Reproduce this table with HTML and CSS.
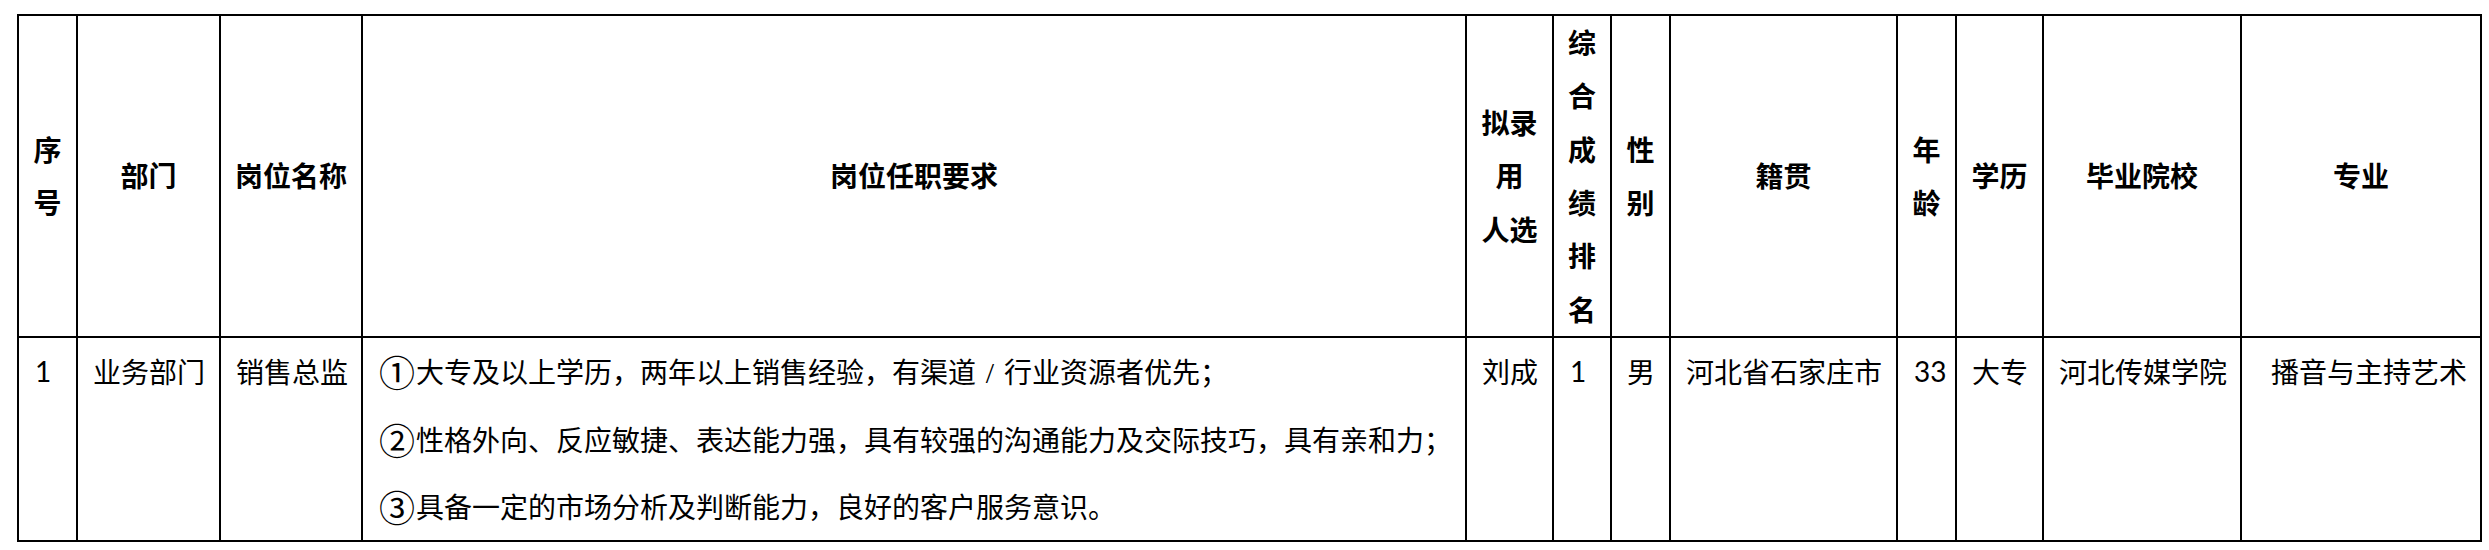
FILE: index.html
```html
<!DOCTYPE html>
<html lang="zh-CN">
<head>
<meta charset="utf-8">
<title>拟录用人选</title>
<link rel="stylesheet" href="styles.css">
</head>
<body>
<div class="page">
  <table class="grid">
    <colgroup>
      <col class="w-no">
      <col class="w-dept">
      <col class="w-post">
      <col class="w-req">
      <col class="w-name">
      <col class="w-rank">
      <col class="w-sex">
      <col class="w-origin">
      <col class="w-age">
      <col class="w-edu">
      <col class="w-school">
      <col class="w-major">
    </colgroup>
    <thead>
      <tr class="head">
        <th>序<br>号</th>
        <th>部门</th>
        <th>岗位名称</th>
        <th>岗位任职要求</th>
        <th>拟录<br>用<br>人选</th>
        <th>综<br>合<br>成<br>绩<br>排<br>名</th>
        <th>性<br>别</th>
        <th>籍贯</th>
        <th>年<br>龄</th>
        <th>学历</th>
        <th>毕业院校</th>
        <th>专业</th>
      </tr>
    </thead>
    <tbody>
      <tr class="data">
        <td class="num">1</td>
        <td>业务部门</td>
        <td>销售总监</td>
        <td class="req">
          <div><span class="mark">①</span>大专及以上学历，两年以上销售经验，有渠道<span class="sep">/</span>行业资源者优先；</div>
          <div><span class="mark">②</span>性格外向、反应敏捷、表达能力强，具有较强的沟通能力及交际技巧，具有亲和力；</div>
          <div><span class="mark">③</span>具备一定的市场分析及判断能力，良好的客户服务意识。</div>
        </td>
        <td>刘成</td>
        <td class="num">1</td>
        <td>男</td>
        <td>河北省石家庄市</td>
        <td class="num">33</td>
        <td>大专</td>
        <td>河北传媒学院</td>
        <td class="major">播音与主持艺术</td>
      </tr>
    </tbody>
  </table>
</div>
</body>
</html>
```

FILE: styles.css
```css
html, body {
  margin: 0;
  padding: 0;
  background: #ffffff;
}

.page {
  padding: 14px 0 0 17px;
}

.grid {
  border-collapse: collapse;
  table-layout: fixed;
  width: 2465px;
  font-family: "Noto Sans CJK SC", sans-serif;
  font-size: 28px;
  color: #000000;
}

.w-no { width: 59px; }
.w-dept { width: 143px; }
.w-post { width: 142px; }
.w-req { width: 1104px; }
.w-name { width: 87px; }
.w-rank { width: 58px; }
.w-sex { width: 59px; }
.w-origin { width: 227px; }
.w-age { width: 59px; }
.w-edu { width: 87px; }
.w-school { width: 198px; }
.w-major { width: 240px; }

.grid th,
.grid td {
  border: 2px solid #000000;
  white-space: nowrap;
  overflow: visible;
}

.head th {
  font-weight: 700;
  line-height: 53.33px;
  padding: 0;
  text-align: center;
  vertical-align: middle;
}

.data td {
  font-weight: 400;
  line-height: 67px;
  padding: 0 0 0 15px;
  text-align: left;
  vertical-align: top;
}

.data td.num {
  font-family: "Lato", "Noto Sans CJK SC", sans-serif;
  padding-left: 16px;
}

.data td.major {
  padding-left: 29px;
}

.data td.req {
  padding-left: 16px;
}

.req div {
  line-height: 67px;
}

.mark {
  display: inline-block;
  width: 37px;
  font-size: 36px;
  line-height: 1;
  text-align: left;
  vertical-align: -4px;
}

.sep {
  display: inline-block;
  width: 28px;
  text-align: center;
  font-family: "Liberation Serif", serif;
  font-size: 30px;
}
```
